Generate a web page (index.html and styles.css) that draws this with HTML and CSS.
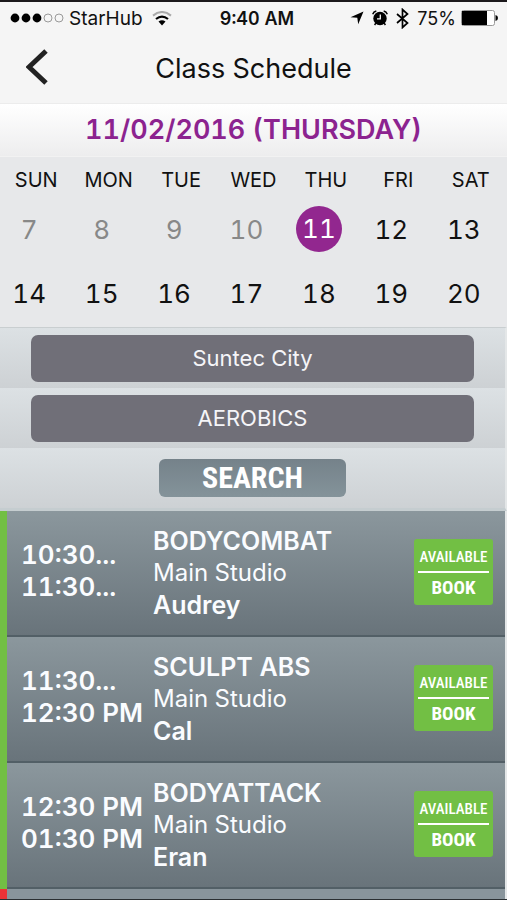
FILE: index.html
```html
<!DOCTYPE html>
<html lang="en">
<head>
<meta charset="utf-8">
<meta name="viewport" content="width=device-width, initial-scale=1">
<title>Class Schedule</title>
<link rel="stylesheet" href="styles.css">
</head>
<body>
<div class="status">
  <div class="status-side">
    <svg class="signal" width="54" height="12" viewBox="0 0 54 12" aria-hidden="true">
      <g fill="#000"><circle cx="5" cy="6" r="4.4"/><circle cx="16" cy="6" r="4.4"/><circle cx="27" cy="6" r="4.4"/></g>
      <g fill="none" stroke="#999" stroke-width="1"><circle cx="38" cy="6" r="4"/><circle cx="49" cy="6" r="4"/></g>
    </svg>
    <span class="carrier">StarHub</span>
    <svg class="wifi" width="20" height="15" viewBox="0 0 20 15" fill="none" aria-hidden="true">
      <path d="M1 4.600Q10-2.600 19 4.600" stroke="#aaa" stroke-width="2"/>
      <path d="M4 8Q10 3.200 16 8" stroke="#000" stroke-width="2.200"/>
      <path d="M6.500 10.600Q10 7.800 13.500 10.600L10 14.400z" fill="#000"/>
    </svg>
  </div>
  <span class="clock">9:40 AM</span>
  <div class="status-side status-right">
    <svg width="14" height="14" viewBox="0 0 14 14" aria-hidden="true"><path d="M13.500.5 8.200 13.200 7.300 6.800.5 6.300z"/></svg>
    <svg width="16" height="16" viewBox="0 0 16 16" aria-hidden="true">
      <circle cx="8" cy="8.500" r="6.700"/>
      <path d="M.7 4.200Q1.500 1.600 4.300.9M15.300 4.200Q14.500 1.600 11.700.9M3.800 13.200 2.600 15M12.200 13.200 13.400 15" fill="none" stroke="#000" stroke-width="1.500"/>
      <path d="M8.300 4.600V8.800H5" fill="none" stroke="#f5f5f5" stroke-width="1.300"/>
    </svg>
    <svg width="13" height="21" viewBox="0 0 13 21" aria-hidden="true"><path d="M1 6 11.500 15 6.500 19.500V1.500L11.500 6 1 15" fill="none" stroke="#000" stroke-width="1.700"/></svg>
    <span class="percent">75%</span>
    <svg width="37" height="16" viewBox="0 0 37 16" aria-hidden="true">
      <rect x=".5" y=".5" width="33" height="15" rx="2" fill="#fff" stroke="#999"/>
      <path d="M1 1H26V15H1z"/><path d="M34.500 5Q37 5.500 37 8T34.500 11z"/>
    </svg>
  </div>
</div>

<header class="nav">
  <button class="back" type="button" aria-label="Back">
    <svg width="22" height="36" viewBox="0 0 22 36" aria-hidden="true"><path d="M20 2 3 18 20 34" fill="none" stroke="#222" stroke-width="5"/></svg>
  </button>
  <h1>Class Schedule</h1>
</header>

<h2 class="date">11/02/2016 (THURSDAY)</h2>

<table class="calendar">
  <thead>
    <tr><th>SUN</th><th>MON</th><th>TUE</th><th>WED</th><th>THU</th><th>FRI</th><th>SAT</th></tr>
  </thead>
  <tbody>
    <tr><td class="past">7</td><td class="past">8</td><td class="past">9</td><td class="past">10</td><td><span class="today">11</span></td><td>12</td><td>13</td></tr>
    <tr><td>14</td><td>15</td><td>16</td><td>17</td><td>18</td><td>19</td><td>20</td></tr>
  </tbody>
</table>

<form class="filters">
  <div class="filter"><select aria-label="Location"><option>Suntec City</option></select></div>
  <div class="filter"><select aria-label="Class type"><option>AEROBICS</option></select></div>
  <div class="filter"><button class="search" type="button">SEARCH</button></div>
</form>

<ul class="classes">
  <li class="class">
    <div class="times"><span>10:30...</span><span>11:30...</span></div>
    <div class="info"><strong>BODYCOMBAT</strong><span>Main Studio</span><strong>Audrey</strong></div>
    <button class="book" type="button"><span class="state">AVAILABLE</span><span class="action">BOOK</span></button>
  </li>
  <li class="class">
    <div class="times"><span>11:30...</span><span>12:30 PM</span></div>
    <div class="info"><strong>SCULPT ABS</strong><span>Main Studio</span><strong>Cal</strong></div>
    <button class="book" type="button"><span class="state">AVAILABLE</span><span class="action">BOOK</span></button>
  </li>
  <li class="class">
    <div class="times"><span>12:30 PM</span><span>01:30 PM</span></div>
    <div class="info"><strong>BODYATTACK</strong><span>Main Studio</span><strong>Eran</strong></div>
    <button class="book" type="button"><span class="state">AVAILABLE</span><span class="action">BOOK</span></button>
  </li>
  <li class="class-next"></li>
</ul>
</body>
</html>
```
FILE: styles.css
```css
* { box-sizing: border-box; }

body {
  margin: 0;
  min-height: 100vh;
  display: flex;
  flex-direction: column;
  border-top: 2px solid #1c191c;
  border-bottom: 1px solid #2b3033;
  background: #f5f5f5;
  color: #111;
  font-family: Inter, "Liberation Sans", sans-serif;
  font-variant-numeric: tabular-nums;
}

button, select { font-family: inherit; border: 0; margin: 0; padding: 0; }
svg { display: block; flex: none; }

.status {
  display: grid;
  grid-template-columns: 1fr auto 1fr;
  align-items: center;
  height: 32px;
  padding: 0 9px 0 10px;
  font-size: 18px;
}
.status-side { display: flex; align-items: center; gap: 5px; }
.status-right { justify-content: flex-end; gap: 8px; }
.wifi { margin-left: 4px; }
.carrier { font-size: 19px; }
.clock { padding-left: 6px; font-weight: 600; }
.percent { margin-right: -3px; font-variant-numeric: normal; }

.nav {
  display: grid;
  grid-template-columns: 72px 1fr 72px;
  align-items: center;
  height: 70px;
  border-bottom: 1px solid #ececec;
}
.back { justify-self: start; margin-left: 26px; padding-bottom: 4px; background: none; }
.nav h1 { margin: 0; text-align: center; font-size: 27px; font-weight: 400; }

.date {
  margin: 0;
  height: 53px;
  line-height: 51px;
  border-bottom: 1px solid #f2f2f2;
  background: linear-gradient(#fff, #ededee);
  color: #8c238f;
  text-align: center;
  font-size: 27px;
  font-weight: 600;
}

.calendar {
  width: 100%;
  table-layout: fixed;
  border-collapse: collapse;
  background: #e7e8ea;
}
.calendar th { height: 42px; padding: 4px 0 0; font-size: 20px; font-weight: 400; }
.calendar td { height: 64px; padding: 0 14px 4px 0; text-align: center; font-size: 26px; }
.calendar .past { color: #888; }
.today {
  display: block;
  width: 46px;
  height: 46px;
  margin: 0 auto;
  border-radius: 50%;
  background: #92278f;
  color: #fff;
  line-height: 46px;
}

.filters, .classes { border-right: 2px solid #e4e7e8; }
.filters { border-top: 1px solid #c9ced0; border-bottom: 3px solid #c5cdd0; }
.filter {
  display: flex;
  align-items: center;
  justify-content: center;
  height: 60px;
  padding: 0 31px;
  background: linear-gradient(#dce1e4, #cdd1d4);
}
.filter select {
  appearance: none;
  width: 100%;
  height: 47px;
  border-radius: 7px;
  background: #706f78;
  color: #f5f5f8;
  font-size: 22px;
  text-align: center;
  text-align-last: center;
}
.search {
  width: 187px;
  height: 38px;
  border-radius: 6px;
  background: linear-gradient(#75828a, #84939a);
  color: #fff;
  font-family: "Roboto Condensed", Roboto, sans-serif;
  font-size: 30px;
  font-weight: 700;
  line-height: 36px;
}

.classes { flex: 1; margin: 0; padding: 0; list-style: none; background: #89959c; }
.class {
  display: grid;
  grid-template-columns: 132px 1fr 79px;
  align-items: center;
  height: 126px;
  padding: 0 12px 4px 14px;
  border-left: 7px solid #72bf44;
  background: linear-gradient(#525f66, #525f66) bottom / 100% 2px no-repeat, linear-gradient(#8b979d, #68737a);
  color: #fafcff;
}
.times, .info { display: flex; flex-direction: column; white-space: nowrap; }
.times { font-size: 26px; font-weight: 600; line-height: 32px; padding-bottom: 2px; }
.info { padding-top: 2px; font-size: 24px; line-height: 32px; }
.info strong { font-size: 25px; font-weight: 600; }
.book {
  display: flex;
  flex-direction: column;
  height: 66px;
  padding: 0 4px;
  border-radius: 3px;
  background: #72bf44;
  color: #fff;
  font-family: "Roboto Condensed", Roboto, sans-serif;
}
.state, .action { display: block; width: 100%; line-height: 30px; text-align: center; }
.state { border-bottom: 2px solid #fff; font-size: 15px; font-weight: 500; height: 34px; line-height: 36px; }
.action { font-size: 19px; font-weight: 700; }
.class-next { height: 10px; border-left: 7px solid #ed3237; }
```
